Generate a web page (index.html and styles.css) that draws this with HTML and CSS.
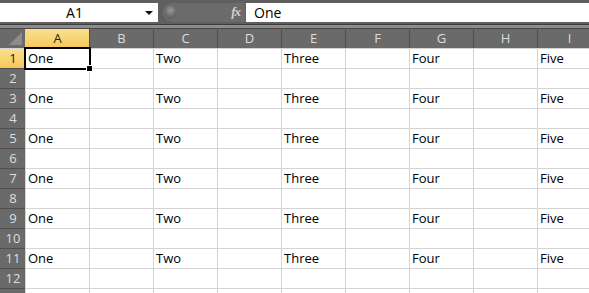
FILE: index.html
```html
<!DOCTYPE html>
<html lang="en">
<head>
  <meta charset="UTF-8">
  <title>Sheet</title>
  <link rel="stylesheet" href="styles.css">
</head>
<body>

<div class="formula-bar">
  <div class="name-box">
    <span class="name">A1</span>
    <span class="drop"></span>
  </div>
  <div class="pill">
    <span class="knob"></span>
    <span class="fx">fx</span>
  </div>
  <div class="formula">One</div>
</div>
<div class="split"></div>

<div class="sheet">
  <div class="corner"><span class="tri"></span></div>
  <div class="col-head active">A</div>
  <div class="col-head">B</div>
  <div class="col-head">C</div>
  <div class="col-head">D</div>
  <div class="col-head">E</div>
  <div class="col-head">F</div>
  <div class="col-head">G</div>
  <div class="col-head">H</div>
  <div class="col-head">I</div>

  <div class="row-head active">1</div>
  <div class="cell selected">One<span class="handle"></span></div><div class="cell"></div><div class="cell">Two</div><div class="cell"></div><div class="cell">Three</div><div class="cell"></div><div class="cell">Four</div><div class="cell"></div><div class="cell">Five</div>
  <div class="row-head">2</div>
  <div class="cell"></div><div class="cell"></div><div class="cell"></div><div class="cell"></div><div class="cell"></div><div class="cell"></div><div class="cell"></div><div class="cell"></div><div class="cell"></div>
  <div class="row-head">3</div>
  <div class="cell">One</div><div class="cell"></div><div class="cell">Two</div><div class="cell"></div><div class="cell">Three</div><div class="cell"></div><div class="cell">Four</div><div class="cell"></div><div class="cell">Five</div>
  <div class="row-head">4</div>
  <div class="cell"></div><div class="cell"></div><div class="cell"></div><div class="cell"></div><div class="cell"></div><div class="cell"></div><div class="cell"></div><div class="cell"></div><div class="cell"></div>
  <div class="row-head">5</div>
  <div class="cell">One</div><div class="cell"></div><div class="cell">Two</div><div class="cell"></div><div class="cell">Three</div><div class="cell"></div><div class="cell">Four</div><div class="cell"></div><div class="cell">Five</div>
  <div class="row-head">6</div>
  <div class="cell"></div><div class="cell"></div><div class="cell"></div><div class="cell"></div><div class="cell"></div><div class="cell"></div><div class="cell"></div><div class="cell"></div><div class="cell"></div>
  <div class="row-head">7</div>
  <div class="cell">One</div><div class="cell"></div><div class="cell">Two</div><div class="cell"></div><div class="cell">Three</div><div class="cell"></div><div class="cell">Four</div><div class="cell"></div><div class="cell">Five</div>
  <div class="row-head">8</div>
  <div class="cell"></div><div class="cell"></div><div class="cell"></div><div class="cell"></div><div class="cell"></div><div class="cell"></div><div class="cell"></div><div class="cell"></div><div class="cell"></div>
  <div class="row-head">9</div>
  <div class="cell">One</div><div class="cell"></div><div class="cell">Two</div><div class="cell"></div><div class="cell">Three</div><div class="cell"></div><div class="cell">Four</div><div class="cell"></div><div class="cell">Five</div>
  <div class="row-head">10</div>
  <div class="cell"></div><div class="cell"></div><div class="cell"></div><div class="cell"></div><div class="cell"></div><div class="cell"></div><div class="cell"></div><div class="cell"></div><div class="cell"></div>
  <div class="row-head">11</div>
  <div class="cell">One</div><div class="cell"></div><div class="cell">Two</div><div class="cell"></div><div class="cell">Three</div><div class="cell"></div><div class="cell">Four</div><div class="cell"></div><div class="cell">Five</div>
  <div class="row-head">12</div>
  <div class="cell"></div><div class="cell"></div><div class="cell"></div><div class="cell"></div><div class="cell"></div><div class="cell"></div><div class="cell"></div><div class="cell"></div><div class="cell"></div>
  <div class="row-head"></div>
  <div class="cell"></div><div class="cell"></div><div class="cell"></div><div class="cell"></div><div class="cell"></div><div class="cell"></div><div class="cell"></div><div class="cell"></div><div class="cell"></div>
</div>

</body>
</html>
```

FILE: styles.css
```css
body {
  margin: 0;
  width: 589px;
  height: 293px;
  overflow: hidden;
  background: #fff;
  font-family: 'Open Sans', sans-serif;
  color: #000;
}
.formula-bar {
  display: flex;
  align-items: center;
  height: 23px;
  padding-top: 1px;
  background: #5f5f5f;
}
.name-box {
  display: flex;
  align-items: center;
  width: 158px;
  height: 19px;
  background: #fff;
}
.name-box .name {
  flex: 1;
  text-align: center;
  font-size: 14px;
  padding-left: 4px;
}
.name-box .drop {
  width: 0;
  height: 0;
  margin-right: 5px;
  border-left: 4px solid transparent;
  border-right: 4px solid transparent;
  border-top: 4px solid #111;
}
.pill {
  position: relative;
  width: 84px;
  height: 19px;
  margin-left: 3px;
  border-radius: 10px 0 0 10px;
  background: #6b6b6b;
  box-shadow: inset 1px 0 0 #555;
}
.knob {
  position: absolute;
  left: 3px;
  top: 3px;
  width: 13px;
  height: 13px;
  border-radius: 50%;
  background: radial-gradient(circle at 50% 35%, #9a9a9a, #6a6a6a 55%, #565656);
}
.fx {
  position: absolute;
  right: 5px;
  top: 1px;
  font-family: 'Liberation Serif', serif;
  font-style: italic;
  font-weight: bold;
  font-size: 13px;
  letter-spacing: -1px;
  color: #d2d2d2;
}
.formula {
  flex: 1;
  height: 19px;
  margin-left: 1px;
  background: #fff;
  font-size: 14px;
  line-height: 19px;
  padding-left: 8px;
}
.split {
  height: 3px;
  border-top: 1px solid #3e3e3e;
  background: #8c8c8c;
}
.sheet {
  display: grid;
  grid-template-columns: 25px repeat(9, 63px);
  grid-auto-rows: 19px;
  width: 602px;
  background: #d4d4d4;
  gap: 1px;
  border-top: 1px solid #4a4a4a;
}
.corner {
  position: relative;
  background: #6a6a6a;
}
.tri {
  position: absolute;
  right: 3px;
  bottom: 3px;
  border-left: 13px solid transparent;
  border-bottom: 13px solid #8c8c8c;
}
.col-head, .row-head {
  background: #6a6a6a;
  color: #dedede;
  font-size: 13px;
  line-height: 19px;
  text-align: center;
}
.col-head {
  box-shadow: 1px 0 0 #4e4e4e;
}
.row-head {
  padding-left: 1px;
  box-shadow: 0 1px 0 #4e4e4e;
}
.col-head.active, .row-head.active {
  background: linear-gradient(#fbe08e, #f4c85a);
  color: #222;
}
.cell {
  position: relative;
  background: #fff;
  font-size: 13px;
  line-height: 19px;
  padding-left: 2px;
  white-space: nowrap;
}
.cell.selected {
  outline: 2px solid #000;
  outline-offset: 0;
  z-index: 1;
}
.handle {
  position: absolute;
  right: -4px;
  bottom: -4px;
  width: 5px;
  height: 5px;
  background: #000;
  border: 1px solid #fff;
}
```
